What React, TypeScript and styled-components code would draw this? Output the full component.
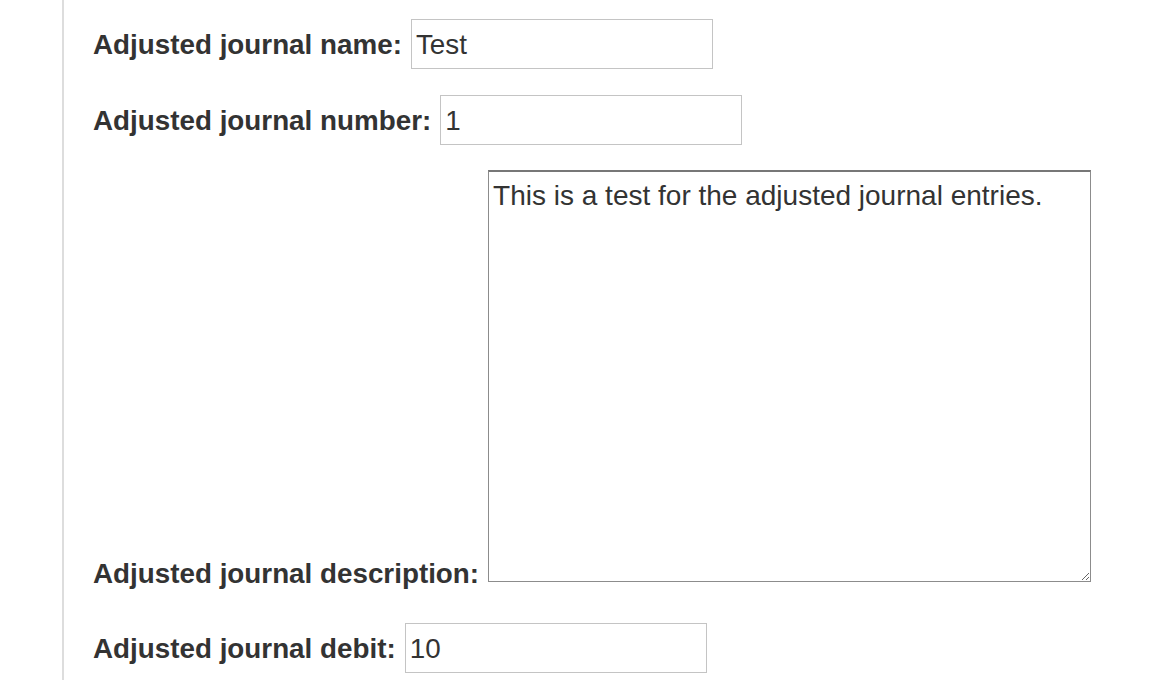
import React from "react";
import styled, { createGlobalStyle } from "styled-components";

const Global = createGlobalStyle`
  html, body { margin: 0; padding: 0; background: #fff; }
  body { font-family: "Liberation Sans", Arial, Helvetica, sans-serif; color: #333; }
`;

const Page = styled.div`
  margin-left: 62px;
  border-left: 2px solid #dddddd;
  min-height: 680px;
  box-sizing: border-box;
  padding: 19px 0 0 29px;
  display: flex;
  flex-direction: column;
`;

const Row = styled.div<{ $textarea?: boolean; $mt: number }>`
  display: flex;
  align-items: ${(p) => (p.$textarea ? "flex-end" : "baseline")};
  gap: 9px;
  margin-top: ${(p) => p.$mt}px;
`;

const Label = styled.label<{ $textarea?: boolean }>`
  font-size: 27.8px;
  font-weight: 700;
  line-height: 28px;
  color: #333;
  white-space: nowrap;
  margin-bottom: ${(p) => (p.$textarea ? "-6px" : "0")};
`;

const TextInput = styled.input`
  box-sizing: border-box;
  width: 302px;
  height: 50px;
  border: 1px solid #c4c4c4;
  border-radius: 0;
  padding: 2px 4px 0;
  font-family: "Liberation Sans", Arial, Helvetica, sans-serif;
  font-size: 27.8px;
  color: #333;
  background: #fff;
  outline: none;
  margin: 0;
`;

const TextArea = styled.textarea`
  box-sizing: border-box;
  width: 603px;
  height: 412px;
  border: 1px solid #8c8c8c;
  border-top: 2px solid #777;
  border-radius: 0;
  padding: 8px 4px;
  font-family: "Liberation Sans", Arial, Helvetica, sans-serif;
  font-size: 28px;
  line-height: 32px;
  color: #333;
  background: #fff;
  outline: none;
  margin: 0;
  resize: both;
  display: block;
`;

export default function App() {
  return (
    <>
      <Global />
      <Page>
        <Row $mt={0}>
          <Label htmlFor="name">Adjusted journal name:</Label>
          <TextInput id="name" defaultValue="Test" />
        </Row>
        <Row $mt={26}>
          <Label htmlFor="number">Adjusted journal number:</Label>
          <TextInput id="number" defaultValue="1" />
        </Row>
        <Row $mt={25} $textarea>
          <Label htmlFor="desc" $textarea>
            Adjusted journal description:
          </Label>
          <TextArea
            id="desc"
            defaultValue="This is a test for the adjusted journal entries."
          />
        </Row>
        <Row $mt={41}>
          <Label htmlFor="debit">Adjusted journal debit:</Label>
          <TextInput id="debit" defaultValue="10" />
        </Row>
      </Page>
    </>
  );
}
